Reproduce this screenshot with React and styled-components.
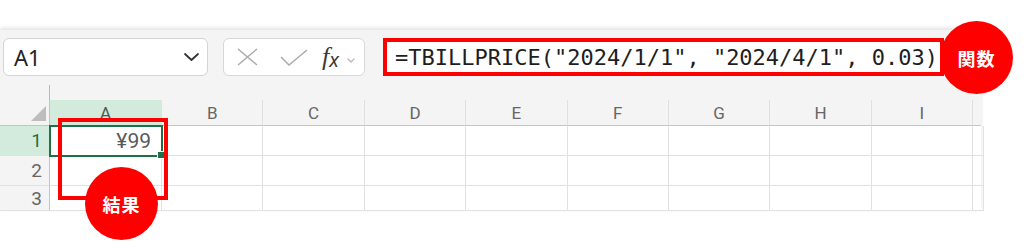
import React from "react";
import styled, { createGlobalStyle } from "styled-components";

const GlobalStyle = createGlobalStyle`
  html, body {
    margin: 0;
    padding: 0;
    background: #ffffff;
  }
  body {
    font-family: "Noto Sans", "Open Sans", sans-serif;
  }
`;

const accentRed = "#ff0000";
const excelGreen = "#1e7145";
const gridLine = "#e1e1e1";

const Page = styled.div`
  position: relative;
  width: 1024px;
  height: 252px;
  overflow: hidden;
  padding-top: 30px;
  box-sizing: border-box;
`;

const Sheet = styled.div`
  width: 981px;
  background: #f4f4f4;
  box-shadow: 0 -2px 4px rgba(0, 0, 0, 0.12);
`;

const Toolbar = styled.div`
  display: flex;
  align-items: stretch;
  height: 38px;
  padding: 8px 0 0 3px;
`;

const NameBox = styled.div`
  width: 205px;
  box-sizing: border-box;
  display: flex;
  align-items: center;
  justify-content: space-between;
  padding: 0 8px 0 10px;
  background: #fff;
  border: 1px solid #d4d4d4;
  border-radius: 6px;
  font-size: 22px;
  color: #222;
`;

const FxButtons = styled.div`
  width: 142px;
  margin-left: 15px;
  box-sizing: border-box;
  display: flex;
  align-items: center;
  padding: 0 6px 0 13px;
  gap: 22px;
  background: #fff;
  border: 1px solid #d8d8d8;
  border-radius: 6px;
`;

const FxLabel = styled.span`
  display: flex;
  align-items: baseline;
  margin-left: -8px;
  font-family: "Liberation Serif", serif;
  font-style: italic;
  color: #3a3a3a;
  font-size: 26px;
  line-height: 1;

  small {
    font-family: "Noto Sans", sans-serif;
    font-style: italic;
    font-size: 20px;
    position: relative;
    top: 2px;
  }
`;

const FormulaBar = styled.div`
  width: 561px;
  margin-left: 18px;
  box-sizing: border-box;
  display: flex;
  align-items: center;
  padding-left: 8px;
  background: #fff;
  border: 4px solid ${accentRed};
  font-family: "DejaVu Sans Mono", monospace;
  font-size: 22px;
  color: #1e1e1e;
  white-space: nowrap;
  overflow: hidden;
`;

const Splitter = styled.div`
  height: 24px;
  display: flex;
  align-items: flex-end;
`;

const SplitterTick = styled.div`
  width: 49px;
  height: 15px;
  border-right: 1px solid #b9b9b9;
`;

const Grid = styled.div`
  display: grid;
  grid-template-columns: 50px 112px repeat(8, 101.4px) 8px;
  grid-template-rows: 26px 30px 30px 25px;
  background: #fff;
`;

const Corner = styled.div`
  background: #f4f4f4;
  border-right: 1px solid #c4c4c4;
  border-bottom: 1px solid #c4c4c4;
  display: flex;
  align-items: flex-end;
  justify-content: flex-end;
  padding: 0 3px 4px 0;
  box-sizing: border-box;

  &::before {
    content: "";
    width: 15px;
    height: 15px;
    background: #bdbdbd;
    clip-path: polygon(100% 0, 100% 100%, 0 100%);
  }
`;

const ColHead = styled.div`
  background: ${(p) => (p.$active ? "#d3ebdc" : "#f4f4f4")};
  border-right: 1px solid ${(p) => (p.$last ? "transparent" : "#e0e0e0")};
  border-bottom: 1px solid #c4c4c4;
  display: flex;
  align-items: center;
  justify-content: center;
  font-family: "Roboto", sans-serif;
  font-size: 17px;
  color: ${(p) => (p.$active ? "#4c5a52" : "#666")};
  box-sizing: border-box;
`;

const RowHead = styled.div`
  background: ${(p) => (p.$active ? "#d3ebdc" : "#f4f4f4")};
  border-right: 1px solid #c4c4c4;
  border-bottom: 1px solid ${gridLine};
  display: flex;
  align-items: center;
  justify-content: flex-end;
  padding-right: 7px;
  font-family: "Roboto", sans-serif;
  font-size: 19px;
  color: ${(p) => (p.$active ? excelGreen : "#666")};
  box-sizing: border-box;
`;

const Cell = styled.div`
  position: relative;
  border-right: 1px solid ${gridLine};
  border-bottom: 1px solid ${gridLine};
  box-sizing: border-box;
  display: flex;
  align-items: center;
  justify-content: flex-end;
  padding-right: 10px;
  font-family: "Roboto", sans-serif;
  font-size: 21px;
  color: #5a5a5a;
  outline: ${(p) => (p.$selected ? `2px solid ${excelGreen}` : "none")};
  outline-offset: -1px;
  z-index: ${(p) => (p.$selected ? 1 : 0)};
`;

const FillHandle = styled.span`
  position: absolute;
  right: -4px;
  bottom: -4px;
  width: 6px;
  height: 6px;
  background: ${excelGreen};
  border: 1px solid #fff;
`;

const RangeMark = styled.div`
  position: absolute;
  left: 58px;
  top: 118px;
  width: 110px;
  height: 82px;
  border: 4px solid ${accentRed};
  box-sizing: border-box;
  z-index: 2;
`;

const Badge = styled.div`
  position: absolute;
  left: ${(p) => p.$x}px;
  top: ${(p) => p.$y}px;
  width: 73px;
  height: 73px;
  border-radius: 50%;
  background: ${accentRed};
  color: #fff;
  display: flex;
  align-items: center;
  justify-content: center;
  font-family: "Noto Sans CJK JP", sans-serif;
  font-weight: 700;
  font-size: 18px;
  letter-spacing: 1px;
  z-index: 3;
`;

const columns = ["A", "B", "C", "D", "E", "F", "G", "H", "I", ""];

const Chevron = ({ color = "#333", w = 15, h = 8, sw = 1.8 }) => (
  <svg width={w} height={h} viewBox={`0 0 ${w} ${h}`}>
    <polyline
      points={`1,1 ${w / 2},${h - 1} ${w - 1},1`}
      fill="none"
      stroke={color}
      strokeWidth={sw}
      strokeLinecap="round"
      strokeLinejoin="round"
    />
  </svg>
);

const CancelIcon = () => (
  <svg width="21" height="18" viewBox="0 0 21 18">
    <path d="M1 1 L20 17 M20 1 L1 17" stroke="#ababab" strokeWidth="1.5" fill="none" />
  </svg>
);

const EnterIcon = () => (
  <svg width="28" height="17" viewBox="0 0 28 17">
    <path d="M1 8 L9 16 L27 1" stroke="#ababab" strokeWidth="1.5" fill="none" />
  </svg>
);

const App = () => {
  return (
    <Page>
      <GlobalStyle />
      <Sheet>
        <Toolbar>
          <NameBox>
            <span>A1</span>
            <Chevron />
          </NameBox>
          <FxButtons>
            <CancelIcon />
            <EnterIcon />
            <FxLabel>
              f<small>x</small>
            </FxLabel>
            <span style={{ marginLeft: -14 }}>
              <Chevron color="#b5b5b5" w={8} h={5} sw={1.2} />
            </span>
          </FxButtons>
          <FormulaBar>=TBILLPRICE("2024/1/1", "2024/4/1", 0.03)</FormulaBar>
        </Toolbar>
        <Splitter>
          <SplitterTick />
        </Splitter>
        <Grid>
          <Corner />
          {columns.map((c, i) => (
            <ColHead key={i} $active={c === "A"} $last={c === ""}>
              {c}
            </ColHead>
          ))}
          {[1, 2, 3].map((r) => (
            <React.Fragment key={r}>
              <RowHead $active={r === 1}>{r}</RowHead>
              {columns.map((c, i) => {
                const selected = r === 1 && c === "A";
                return (
                  <Cell key={i} $selected={selected}>
                    {selected && "¥99"}
                    {selected && <FillHandle />}
                  </Cell>
                );
              })}
            </React.Fragment>
          ))}
        </Grid>
      </Sheet>
      <RangeMark />
      <Badge $x={940} $y={21}>関数</Badge>
      <Badge $x={85} $y={167}>結果</Badge>
    </Page>
  );
};

export default App;
